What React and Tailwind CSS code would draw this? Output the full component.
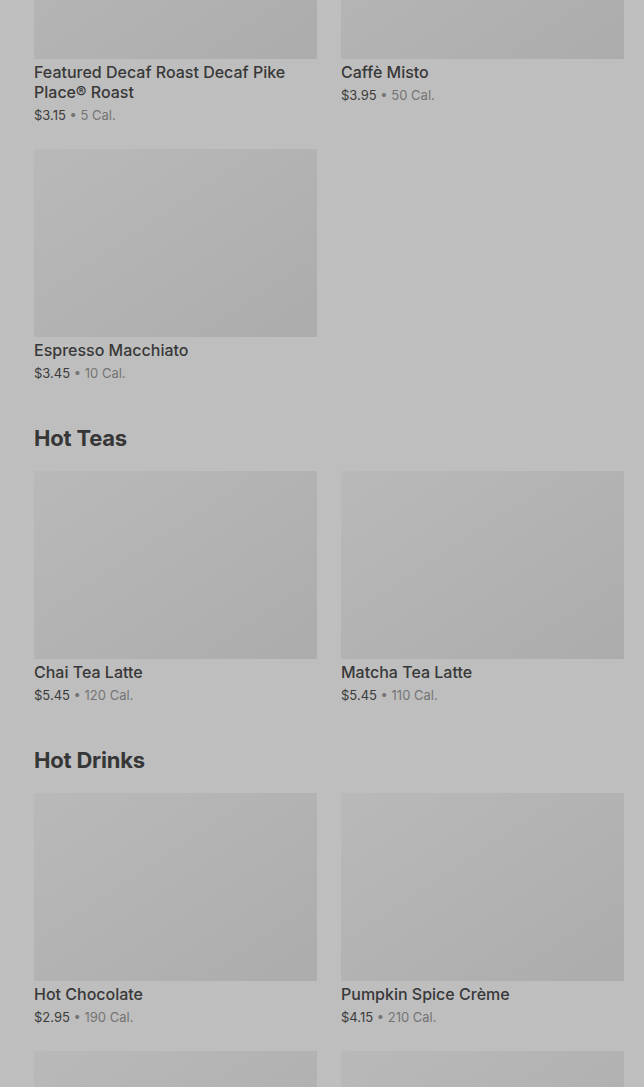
import React from "react";

const sections = [
  {
    title: null,
    items: [
      { name: "Featured Decaf Roast Decaf Pike Place® Roast", price: "$3.15", cal: "5 Cal." },
      { name: "Caffè Misto", price: "$3.95", cal: "50 Cal." },
      { name: "Espresso Macchiato", price: "$3.45", cal: "10 Cal." }
    ]
  },
  {
    title: "Hot Teas",
    items: [
      { name: "Chai Tea Latte", price: "$5.45", cal: "120 Cal." },
      { name: "Matcha Tea Latte", price: "$5.45", cal: "110 Cal." }
    ]
  },
  {
    title: "Hot Drinks",
    items: [
      { name: "Hot Chocolate", price: "$2.95", cal: "190 Cal." },
      { name: "Pumpkin Spice Crème", price: "$4.15", cal: "210 Cal." },
      { name: null },
      { name: null }
    ]
  }
];

const ItemCard = ({ item }) => (
  <div className="flex flex-col">
    <div className="h-[188px] w-full bg-gradient-to-br from-[#b9b9b9] to-[#acacac]"></div>
    {item.name && (
      <>
        <div className="mt-[3px] text-[16px] leading-[20px] font-medium text-[#383838]">
          {item.name}
        </div>
        <div className="mt-[3px] text-[13px] leading-[20px] text-[#3c3c3c]">
          {item.price}
          <span className="text-[#747474]"> • {item.cal}</span>
        </div>
      </>
    )}
  </div>
);

const App = () => {
  return (
    <div
      className="h-screen w-full overflow-hidden bg-[#bebebe]"
      style={{ fontFamily: "Inter, 'Liberation Sans', sans-serif" }}
    >
      <div className="mt-[-129px] pl-[34px] pr-[20px]">
        {sections.map((section, i) => (
          <div key={i} className={i === 0 ? "" : "mt-[41px]"}>
            {section.title && (
              <h2 className="mb-[19px] text-[22px] leading-[28px] font-bold tracking-[-0.2px] text-[#363636]">
                {section.title}
              </h2>
            )}
            <div className="grid grid-cols-2 gap-x-[24px] gap-y-[24px]">
              {section.items.map((item, j) => (
                <ItemCard key={j} item={item} />
              ))}
            </div>
          </div>
        ))}
      </div>
    </div>
  );
};

export default App;
